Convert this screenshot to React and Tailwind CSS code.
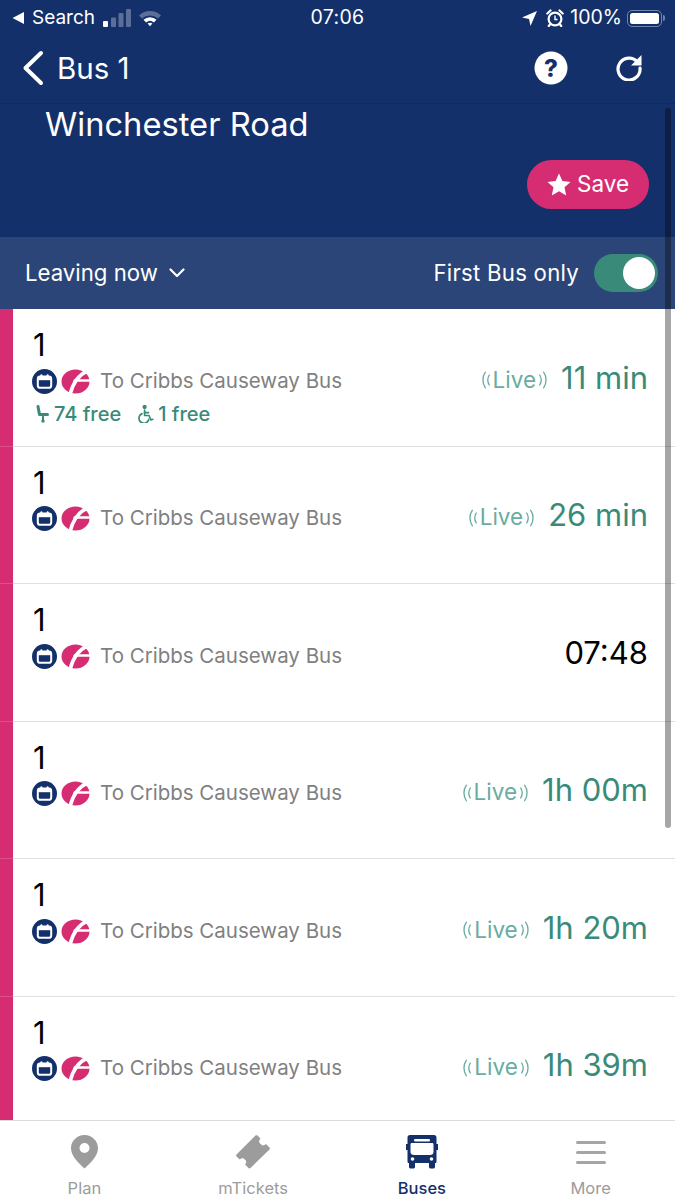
const Cal = () => (
  <svg width="25" height="25" viewBox="0 0 25 25" className="shrink-0">
    <circle cx="12.5" cy="12.5" r="12.5" fill="#14306b" />
    <rect x="5.8" y="7.4" width="13.4" height="11.4" rx="2.4" fill="none" stroke="#fff" strokeWidth="2" />
    <rect x="5.8" y="7.8" width="13.4" height="3.4" fill="#fff" />
    <rect x="8.4" y="5.2" width="2" height="3.2" rx="1" fill="#fff" />
    <rect x="14.6" y="5.2" width="2" height="3.2" rx="1" fill="#fff" />
  </svg>
);

const First = () => (
  <svg width="29" height="25" viewBox="0 0 29 25" className="shrink-0">
    <ellipse cx="14.5" cy="12.5" rx="14" ry="12" fill="#d62d72" />
    <path d="M9 26 C11 17 15 7 27 1.5" fill="none" stroke="#fff" strokeWidth="3.6" />
    <path d="M13 10.2 H29 V12.8 H12 Z" fill="#fff" />
  </svg>
);

const Seat = () => (
  <svg width="14" height="18" viewBox="0 0 14 18" className="shrink-0">
    <path d="M3 1.5 L4.5 9.5 H12.5" fill="none" stroke="#3a8a79" strokeWidth="3" strokeLinecap="round" strokeLinejoin="round" />
    <circle cx="8" cy="16" r="1.7" fill="#3a8a79" />
    <path d="M8 10 V15" stroke="#3a8a79" strokeWidth="2" />
  </svg>
);

const Wheelchair = () => (
  <svg width="17" height="18" viewBox="0 0 17 18" className="shrink-0" fill="none" stroke="#3a8a79" strokeWidth="1.7" strokeLinecap="round" strokeLinejoin="round">
    <circle cx="7.6" cy="2" r="1.3" fill="#3a8a79" />
    <path d="M7.6 5 V10.5 H12 L14 15 L15.8 14.3" />
    <path d="M7.6 7.6 H11.5" />
    <path d="M5 8.6 A5 5 0 1 0 11.8 14.4" />
  </svg>
);

const Live = () => (
  <div className="flex items-center text-[#69aca0] text-[22.5px] leading-none mt-[6px]">
    <svg width="11" height="20" viewBox="0 0 9 18" fill="none" stroke="#69aca0" strokeWidth="1.2" strokeLinecap="round" className="mr-[1px]">
      <path d="M3.5 2 C0.6 6 0.6 12 3.5 16" />
      <path d="M7 4.5 C5.2 7.5 5.2 10.5 7 13.5" />
    </svg>
    <span>Live</span>
    <svg width="11" height="20" viewBox="0 0 9 18" fill="none" stroke="#69aca0" strokeWidth="1.2" strokeLinecap="round" className="ml-[1px]">
      <path d="M5.5 2 C8.4 6 8.4 12 5.5 16" />
      <path d="M2 4.5 C3.8 7.5 3.8 10.5 2 13.5" />
    </svg>
  </div>
);

const rows = [
  { time: "11 min", live: true, free: true },
  { time: "26 min", live: true },
  { time: "07:48", live: false },
  { time: "1h 00m", live: true },
  { time: "1h 20m", live: true },
  { time: "1h 39m", live: true },
];

const Row = ({ time, live, free }) => (
  <div className="flex h-[137.5px] shrink-0">
    <div className="w-[13px] shrink-0 bg-[#d62d72] border-b border-[#e04f88]" />
    <div className="flex-1 flex justify-between border-b border-[#dfdfdf] pl-[19px] pr-[27px] bg-white">
      <div className="pt-[18px]">
        <div className="text-[31px] leading-[36px] text-black pl-[1px]">1</div>
        <div className="flex items-center h-[26px] mt-[5px]">
          <Cal />
          <div className="w-[4px]" />
          <First />
          <span className="ml-[10px] text-[20.5px] text-[#808080]">To Cribbs Causeway Bus</span>
        </div>
        {free && (
          <div className="flex items-center mt-[8px] text-[20px] font-medium text-[#3a8a79] leading-[24px]">
            <span className="ml-[3px]"><Seat /></span>
            <span className="ml-[5px]">74 free</span>
            <span className="ml-[16px]"><Wheelchair /></span>
            <span className="ml-[4px]">1 free</span>
          </div>
        )}
      </div>
      <div className="flex items-center h-[40px] mt-[48px]">
        {live && <Live />}
        <span className={"ml-[13px] text-[31px] leading-none " + (live ? "text-[#3a8a79]" : "text-black")}>{time}</span>
      </div>
    </div>
  </div>
);

export default function App() {
  return (
    <div className="relative w-[675px] h-[1200px] overflow-hidden bg-white flex flex-col font-['Inter',sans-serif]">
      <div className="bg-[#14306b] text-white shrink-0">
        <div className="h-[34px] flex items-center justify-between pl-[12px] pr-[10px] pt-[2px] relative">
          <div className="flex items-center text-[19px]">
            <svg width="13" height="14" viewBox="0 0 13 14" className="mr-[7px]"><path d="M12 1 V13 L0.5 7 Z" fill="#fff" /></svg>
            <span>Search</span>
            <svg width="30" height="18" viewBox="0 0 30 18" className="ml-[7px]">
              <rect x="1" y="12" width="5" height="6" rx="1" fill="#fff" />
              <rect x="9" y="8.5" width="5" height="9.5" rx="1" fill="#fff" opacity="0.3" />
              <rect x="16.5" y="4" width="5" height="14" rx="1" fill="#fff" opacity="0.3" />
              <rect x="24" y="0" width="5" height="18" rx="1" fill="#fff" opacity="0.3" />
            </svg>
            <svg width="24" height="18" viewBox="0 0 24 18" className="ml-[6px]">
              <path d="M1 6.5 A16 16 0 0 1 23 6.5 L20 9.5 A12 12 0 0 0 4 9.5 Z" fill="#fff" opacity="0.3" />
              <path d="M5.5 10.8 A9.5 9.5 0 0 1 18.5 10.8 L15.8 13.4 A6 6 0 0 0 8.2 13.4 Z" fill="#fff" />
              <path d="M9.6 14.6 A4 4 0 0 1 14.4 14.6 L12 17.3 Z" fill="#fff" />
            </svg>
          </div>
          <div className="absolute left-0 right-0 text-center text-[19.5px] pointer-events-none tracking-[0.3px]">07:06</div>
          <div className="flex items-center">
            <svg width="15" height="15" viewBox="0 0 15 15"><path d="M15 0 L0 6.5 L7 8 L8.5 15 Z" fill="#fff" /></svg>
            <svg width="18" height="18" viewBox="0 0 18 18" className="ml-[9px]" fill="none" stroke="#fff">
              <circle cx="9" cy="10" r="6.4" strokeWidth="2.2" />
              <path d="M9 6.5 V10.5 H11.5" strokeWidth="1.4" />
              <path d="M1.3 4.5 L4.5 1.5 M16.7 4.5 L13.5 1.5 M4 15.5 L2.8 17 M14 15.5 L15.2 17" strokeWidth="2.2" strokeLinecap="round" />
            </svg>
            <span className="ml-[6px] text-[19.5px]">100%</span>
            <div className="ml-[5px] flex items-center">
              <div className="w-[35px] h-[17px] rounded-[5px] border border-[#6f84ad] p-[2px]">
                <div className="w-full h-full bg-white rounded-[2.5px]" />
              </div>
              <div className="w-[2px] h-[6px] ml-[1px] bg-[#6f84ad] rounded-r-sm" />
            </div>
          </div>
        </div>
        <div className="h-[70px] flex items-center justify-between border-b border-[#0f2a5e] pl-[22px] pr-[32px]">
          <div className="flex items-center -mt-[1px]">
            <svg width="22" height="36" viewBox="0 0 22 36" fill="none" stroke="#fff" strokeWidth="4" strokeLinecap="round" strokeLinejoin="round">
              <path d="M19 3 L3.5 18 L19 33" />
            </svg>
            <span className="ml-[13px] text-[29.5px]">Bus 1</span>
          </div>
          <div className="flex items-center -mt-[3px]">
            <svg width="34" height="34" viewBox="0 0 34 34" className="mt-[1px]">
              <circle cx="17" cy="17" r="16.5" fill="#fff" />
              <text x="17" y="25.5" textAnchor="middle" fontSize="24" fontWeight="800" fill="#14306b" fontFamily="Inter">?</text>
            </svg>
            <svg width="28" height="28" viewBox="0 0 28 28" className="ml-[47px]" fill="none">
              <path d="M22.5 9 A11 11 0 1 0 25 15" stroke="#fff" strokeWidth="3.2" strokeLinecap="round" />
              <path d="M26.5 2 V12.5 H16 Z" fill="#fff" />
            </svg>
          </div>
        </div>
        <div className="h-[133px] relative">
          <div className="pl-[45px] text-[32.7px] leading-[40px]">Winchester Road</div>
          <div className="flex justify-end pr-[26px] mt-[16px]">
            <div className="flex items-center justify-center w-[122px] h-[49px] rounded-full bg-[#d62d72]">
              <svg width="24" height="23" viewBox="0 0 24 23"><path d="M12 0.5 L15.4 8 L23.5 8.9 L17.5 14.3 L19.2 22.4 L12 18.3 L4.8 22.4 L6.5 14.3 L0.5 8.9 L8.6 8 Z" fill="#fff" /></svg>
              <span className="ml-[6px] text-[22.5px] leading-none">Save</span>
            </div>
          </div>
        </div>
      </div>

      <div className="h-[72px] shrink-0 bg-[#2b4578] flex items-center justify-between pl-[25px] pr-[17px] text-white">
        <div className="flex items-center text-[22.2px]">
          <span>Leaving now</span>
          <svg width="16" height="10" viewBox="0 0 16 10" className="ml-[11px]" fill="none" stroke="#fff" strokeWidth="2.2" strokeLinecap="round" strokeLinejoin="round"><path d="M1.5 1.5 L8 8 L14.5 1.5" /></svg>
        </div>
        <div className="flex items-center">
          <span className="text-[22.2px] tracking-[0.25px]">First Bus only</span>
          <div className="ml-[15px] w-[64px] h-[38px] rounded-full bg-[#3a8a79] relative">
            <div className="absolute right-[3px] top-[3px] w-[32px] h-[32px] rounded-full bg-white" />
          </div>
        </div>
      </div>

      <div className="flex-1 min-h-0 overflow-hidden flex flex-col">
        {rows.map((r, i) => <Row key={i} {...r} />)}
      </div>

      <div className="h-[80px] shrink-0 border-t border-[#dcdcdc] bg-white grid grid-cols-4 text-[16.5px]">
        <div className="flex flex-col items-center pt-[14px] text-[#9c9c9c]">
          <svg width="27" height="34" viewBox="0 0 27 34" className="h-[34px]">
            <path fillRule="evenodd" d="M13.5 0 C6 0 0 6 0 13.2 C0 21 8 28.5 13.5 33.5 C19 28.5 27 21 27 13.2 C27 6 21 0 13.5 0 Z M13.5 8 A5 5 0 1 1 13.5 18 A5 5 0 1 1 13.5 8 Z" fill="#9c9c9c" />
          </svg>
          <span className="mt-[9px] leading-[20px]">Plan</span>
        </div>
        <div className="flex flex-col items-center pt-[14px] text-[#9c9c9c]">
          <svg width="34" height="34" viewBox="0 0 34 34">
            <path d="M21.5 0.5 L24.5 3.5 A2.5 2.5 0 0 0 30 9 L33.5 12.5 C34 13 34 14 33.5 14.5 L14.5 33 C14 33.5 13 33.5 12.5 33 L9 29.5 A2.5 2.5 0 0 0 3.8 24.5 L0.5 21.5 C0 21 0 20 0.5 19.5 L19.5 0.5 C20 0 21 0 21.5 0.5 Z" fill="#9c9c9c" />
          </svg>
          <span className="mt-[9px] leading-[20px]">mTickets</span>
        </div>
        <div className="flex flex-col items-center pt-[14px] text-[#14306b] font-medium">
          <svg width="34" height="34" viewBox="0 0 34 34">
            <path fillRule="evenodd" d="M5 0 H29 C30.5 0 31.5 1 31.5 2.5 V9 H33 V15 H31.5 V26.5 C31.5 27.5 31 28 30 28 V31.5 C30 33 29.5 33.5 28 33.5 H26 C24.5 33.5 24 33 24 31.5 V28 H10 V31.5 C10 33 9.5 33.5 8 33.5 H6 C4.5 33.5 4 33 4 31.5 V28 C3 28 2.5 27.5 2.5 26.5 V15 H1 V9 H2.5 V2.5 C2.5 1 3.5 0 5 0 Z M7 8 C6 8 5.5 8.5 5.5 9.5 V17 C5.5 19 7 20 9 20 H25 C27 20 28.5 19 28.5 17 V9.5 C28.5 8.5 28 8 27 8 Z" fill="#14306b" />
            <rect x="9" y="4" width="16" height="2.4" rx="1.2" fill="#fff" />
            <circle cx="7.5" cy="24" r="1.8" fill="#fff" />
            <circle cx="26.5" cy="24" r="1.8" fill="#fff" />
          </svg>
          <span className="mt-[9px] leading-[20px]">Buses</span>
        </div>
        <div className="flex flex-col items-center pt-[14px] text-[#9c9c9c]">
          <div className="h-[34px] w-[30px] flex flex-col justify-center gap-[7px]">
            <div className="h-[3px] rounded-full bg-[#a5a5a5]" />
            <div className="h-[3px] rounded-full bg-[#a5a5a5]" />
            <div className="h-[3px] rounded-full bg-[#a5a5a5]" />
          </div>
          <span className="mt-[9px] leading-[20px]">More</span>
        </div>
      </div>

      <div className="absolute left-[665px] top-[108px] w-[6px] h-[720px] rounded-full bg-black/35" />
    </div>
  );
}
